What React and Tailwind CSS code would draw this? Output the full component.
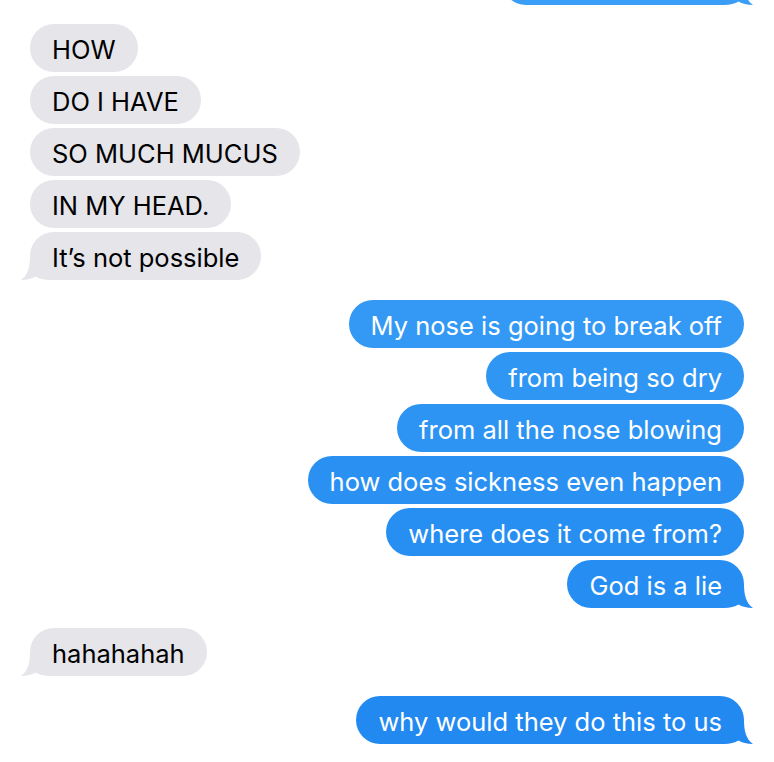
import React from "react";

const FONT = { fontFamily: "Inter, 'Noto Sans', sans-serif" };

/* ---------- tails ---------- */
function TailRight({ fill }) {
  return (
    <svg className="absolute -right-[9px] bottom-0" width="33" height="24" viewBox="0 0 33 24">
      <path d="M0 0 L24 0 C24 11 26 19 33 24 C27 24 22 22.5 18.5 20.5 C15 22.5 10 24 4 24 L0 24 Z" fill={fill} />
    </svg>
  );
}

function TailLeft({ fill }) {
  return (
    <svg className="absolute -left-[9px] bottom-0" width="33" height="24" viewBox="0 0 33 24">
      <path d="M33 0 L9 0 C9 11 7 19 0 24 C6 24 11 22.5 14.5 20.5 C18 22.5 23 24 29 24 L33 24 Z" fill={fill} />
    </svg>
  );
}

function Bubble({ text, me, color, tail }) {
  return (
    <div className={`flex ${me ? "justify-end" : "justify-start"}`}>
      <div
        className={`relative h-[48px] rounded-[24px] px-[22px] pt-[4px] flex items-center text-[25.5px] leading-none ${
          me ? "text-white" : "text-black"
        } ${color}`}
      >
        <span className="relative z-10 whitespace-nowrap">{text}</span>
        {tail && (me ? <TailRight fill={tail} /> : <TailLeft fill={tail} />)}
      </div>
    </div>
  );
}

const GRAY = "#e5e5ea";

export default function App() {
  return (
    <div className="w-[774px] h-[762px] bg-white overflow-hidden" style={FONT}>
      <div className="px-[30px] flex flex-col">
        {/* cut-off message at top */}
        <div className="-mt-[43px] flex justify-end">
          <div className="relative h-[48px] w-[242px] rounded-[24px] bg-[#3a9ef6]">
            <TailRight fill="#3a9ef6" />
          </div>
        </div>

        <div className="mt-[19px] flex flex-col gap-[4px]">
          <Bubble text="HOW" color="bg-[#e5e5ea]" />
          <Bubble text="DO I HAVE" color="bg-[#e5e5ea]" />
          <Bubble text="SO MUCH MUCUS" color="bg-[#e5e5ea]" />
          <Bubble text="IN MY HEAD." color="bg-[#e5e5ea]" />
          <Bubble text="It’s not possible" color="bg-[#e5e5ea]" tail={GRAY} />
        </div>

        <div className="mt-[20px] flex flex-col gap-[4px]">
          <Bubble me text="My nose is going to break off" color="bg-[#3399f5]" />
          <Bubble me text="from being so dry" color="bg-[#3096f4]" />
          <Bubble me text="from all the nose blowing" color="bg-[#2d94f4]" />
          <Bubble me text="how does sickness even happen" color="bg-[#2a91f3]" />
          <Bubble me text="where does it come from?" color="bg-[#288ff2]" />
          <Bubble me text="God is a lie" color="bg-[#268df2]" tail="#268df2" />
        </div>

        <div className="mt-[20px]">
          <Bubble text="hahahahah" color="bg-[#e5e5ea]" tail={GRAY} />
        </div>

        <div className="mt-[20px]">
          <Bubble me text="why would they do this to us" color="bg-[#2289f1]" tail="#2289f1" />
        </div>
      </div>
    </div>
  );
}
